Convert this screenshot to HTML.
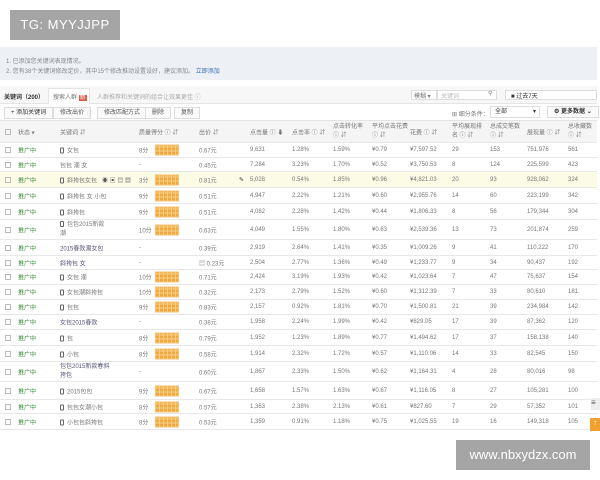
<!DOCTYPE html>
<html><head><meta charset="utf-8"><style>
*{margin:0;padding:0;box-sizing:border-box}
body{width:600px;height:480px;background:#fff;position:relative;overflow:hidden;font-family:"Liberation Sans","Noto Sans CJK SC",sans-serif;font-size:6px;color:#777}
.a{position:absolute;white-space:nowrap}
.tg{left:10px;top:10px;width:110px;height:30px;background:#a5a5a5;color:#fff;font-size:13px;line-height:30px;text-align:center;letter-spacing:.5px}
.wm{left:456px;top:440px;width:134px;height:30px;background:#a5a5a5;color:#fff;font-size:13px;line-height:30px;text-align:center}
.info{left:0;top:47px;width:597px;height:33px;background:#edf1f6}
.r{position:absolute;left:0;width:597px;border-bottom:1px solid #e8e8e8}
.r span{position:absolute;top:50%;transform:translateY(-50%);white-space:nowrap}
.g{color:#3a8a3a}
.q{width:24px;height:11px;background-color:#f2a93b;background-image:repeating-linear-gradient(90deg,transparent 0 3px,#f8cf8a 3px 4px),repeating-linear-gradient(0deg,transparent 0 3px,#f8cf8a 3px 4px);border:1px solid #f7c27a}
.ph{display:inline-block;width:4px;height:6px;border:1px solid #666;border-radius:1px;margin-right:3px;vertical-align:middle}
.cb{width:6px;height:6px;border:1px solid #bbb}
.btn{border:1px solid #ddd;background:#fafafa;height:12px;line-height:11px;padding:0 6px;color:#555}
</style></head><body>
<div class="a tg">TG: MYYJJPP</div>
<div class="a info"></div>
<div class="a" style="left:6px;top:56px;color:#888">1. 已添加您关键词表现情况。</div>
<div class="a" style="left:6px;top:66px;color:#888">2. 您有38个关键词修改定价，其中15个修改推动设置设好，建议添加。 <span style="color:#3a6fb0">立即添加</span></div>
<div class="a" style="left:0;top:86px;width:597px;height:18px;background:#f7f7f7;border-bottom:1px solid #e4e4e4"></div>
<div class="a" style="left:4px;top:92px;color:#333;font-weight:bold">关键词（200）</div>
<div class="a" style="left:48px;top:88px;width:42px;height:16px;background:#fff;border:1px solid #e4e4e4;border-bottom:none"></div>
<div class="a" style="left:53px;top:92px">搜索人群 <span style="background:#e05a4a;color:#fff;padding:0 1px">新</span></div>
<div class="a" style="left:97px;top:92px;color:#aaa">人群推荐和关键词的组合让效果更佳 ⓘ</div>
<div class="a" style="left:411px;top:90px;width:26px;height:10px;border:1px solid #ddd;background:#fff;padding-left:2px">模糊 ▾</div>
<div class="a" style="left:437px;top:90px;width:60px;height:10px;border:1px solid #ddd;background:#fff;padding-left:3px;color:#bbb">关键词</div>
<div class="a" style="left:488px;top:90px">⚲</div>
<div class="a" style="left:505px;top:90px;width:92px;height:10px;border:1px solid #ddd;background:#fff;padding-left:5px;color:#333">■ 过去7天</div>
<div class="a btn" style="left:4px;top:107px;color:#333">+ 添加关键词</div>
<div class="a btn" style="left:53px;top:107px">修改出价</div>
<div class="a" style="left:87px;top:109px;color:#bbb">ⓘ</div>
<div class="a btn" style="left:97px;top:107px">修改匹配方式</div>
<div class="a btn" style="left:145px;top:107px">删除</div>
<div class="a btn" style="left:174px;top:107px">复制</div>
<div class="a" style="left:452px;top:109px">⊞ 细分条件：</div>
<div class="a" style="left:490px;top:106px;width:50px;height:12px;border:1px solid #ddd;padding-left:4px;line-height:11px;color:#333">全部 <span style="float:right;margin-right:3px">▾</span></div>
<div class="a btn" style="left:547px;top:106px;color:#333;font-weight:bold">⚙ 更多数据 ⌄</div>
<div class="r" style="top:120px;height:23px;background:#f5f5f5;border-top:1px solid #e4e4e4">
<span class="cb" style="left:5px"></span><span style="left:18px">状态 ▾</span><span style="left:60px">关键词 ⇵</span><span style="left:139px">质量得分 ⓘ ⇵</span><span style="left:199px">出价 ⇵</span><span style="left:250px">点击量 ⓘ ⬇</span><span style="left:292px">点击率 ⓘ ⇵</span><span style="left:333px;line-height:9px">点击转化率<br>ⓘ ⇵</span><span style="left:372px;line-height:9px">平均点击花费<br>ⓘ ⇵</span><span style="left:410px">花费 ⓘ ⇵</span><span style="left:452px;line-height:9px">平均展现排<br>名 ⓘ ⇵</span><span style="left:490px;line-height:9px">总成交笔数<br>ⓘ ⇵</span><span style="left:527px">展现量 ⓘ ⇵</span><span style="left:568px;line-height:9px">总收藏数<br>ⓘ ⇵</span></div>

<div class="r" style="top:143px;height:15px"><span class="cb" style="left:5px"></span><span class="g" style="left:18px">推广中</span><span style="left:60px"><i class="ph"></i>女包</span><span style="left:139px">8分</span><span class="q" style="left:155px"></span><span style="left:199px">0.67元</span><span style="left:250px">9,631</span><span style="left:292px">1.28%</span><span style="left:333px">1.59%</span><span style="left:372px">¥0.79</span><span style="left:410px">¥7,597.52</span><span style="left:452px">29</span><span style="left:490px">153</span><span style="left:527px">751,976</span><span style="left:568px">561</span></div>
<div class="r" style="top:158px;height:14px"><span class="cb" style="left:5px"></span><span class="g" style="left:18px">推广中</span><span style="left:60px">包包 潮 女</span><span style="left:139px">-</span><span style="left:199px">0.45元</span><span style="left:250px">7,284</span><span style="left:292px">3.23%</span><span style="left:333px">1.70%</span><span style="left:372px">¥0.52</span><span style="left:410px">¥3,750.53</span><span style="left:452px">8</span><span style="left:490px">124</span><span style="left:527px">225,599</span><span style="left:568px">423</span></div>
<div class="r" style="top:172px;height:16px;background:#fbfbe6"><span class="cb" style="left:5px"></span><span class="g" style="left:18px">推广中</span><span style="left:60px"><i class="ph"></i>斜挎包女包</span><span style="left:102px;color:#555">◉ ▣ ▤ ▦</span><span style="left:139px">3分</span><span class="q" style="left:155px"></span><span style="left:199px">0.81元</span><span style="left:239px;color:#333">✎</span><span style="left:250px">5,028</span><span style="left:292px">0.54%</span><span style="left:333px">1.85%</span><span style="left:372px">¥0.96</span><span style="left:410px">¥4,821.03</span><span style="left:452px">20</span><span style="left:490px">93</span><span style="left:527px">928,062</span><span style="left:568px">324</span></div>
<div class="r" style="top:188px;height:16px"><span class="cb" style="left:5px"></span><span class="g" style="left:18px">推广中</span><span style="left:60px"><i class="ph"></i>斜挎包 女 小包</span><span style="left:139px">9分</span><span class="q" style="left:155px"></span><span style="left:199px">0.51元</span><span style="left:250px">4,947</span><span style="left:292px">2.22%</span><span style="left:333px">1.21%</span><span style="left:372px">¥0.60</span><span style="left:410px">¥2,955.76</span><span style="left:452px">14</span><span style="left:490px">60</span><span style="left:527px">223,199</span><span style="left:568px">342</span></div>
<div class="r" style="top:204px;height:16px"><span class="cb" style="left:5px"></span><span class="g" style="left:18px">推广中</span><span style="left:60px"><i class="ph"></i>斜挎包</span><span style="left:139px">9分</span><span class="q" style="left:155px"></span><span style="left:199px">0.51元</span><span style="left:250px">4,082</span><span style="left:292px">2.28%</span><span style="left:333px">1.42%</span><span style="left:372px">¥0.44</span><span style="left:410px">¥1,806.33</span><span style="left:452px">8</span><span style="left:490px">56</span><span style="left:527px">179,344</span><span style="left:568px">304</span></div>
<div class="r" style="top:220px;height:20px"><span class="cb" style="left:5px"></span><span class="g" style="left:18px">推广中</span><span style="left:60px;line-height:9px"><i class="ph"></i>包包2015新款<br>潮</span><span style="left:139px">10分</span><span class="q" style="left:155px"></span><span style="left:199px">0.63元</span><span style="left:250px">4,049</span><span style="left:292px">1.55%</span><span style="left:333px">1.80%</span><span style="left:372px">¥0.63</span><span style="left:410px">¥2,539.36</span><span style="left:452px">13</span><span style="left:490px">73</span><span style="left:527px">201,874</span><span style="left:568px">259</span></div>
<div class="r" style="top:240px;height:16px"><span class="cb" style="left:5px"></span><span class="g" style="left:18px">推广中</span><span style="left:60px;color:#557">2015春款潮女包</span><span style="left:139px">-</span><span style="left:199px">0.39元</span><span style="left:250px">2,919</span><span style="left:292px">2.64%</span><span style="left:333px">1.41%</span><span style="left:372px">¥0.35</span><span style="left:410px">¥1,009.26</span><span style="left:452px">9</span><span style="left:490px">41</span><span style="left:527px">110,222</span><span style="left:568px">170</span></div>
<div class="r" style="top:256px;height:14px"><span class="cb" style="left:5px"></span><span class="g" style="left:18px">推广中</span><span style="left:60px;color:#557">斜挎包 女</span><span style="left:139px">-</span><span style="left:199px">▤ 0.23元</span><span style="left:250px">2,504</span><span style="left:292px">2.77%</span><span style="left:333px">1.36%</span><span style="left:372px">¥0.49</span><span style="left:410px">¥1,233.77</span><span style="left:452px">9</span><span style="left:490px">34</span><span style="left:527px">90,437</span><span style="left:568px">192</span></div>
<div class="r" style="top:270px;height:15px"><span class="cb" style="left:5px"></span><span class="g" style="left:18px">推广中</span><span style="left:60px"><i class="ph"></i>女包 潮</span><span style="left:139px">10分</span><span class="q" style="left:155px"></span><span style="left:199px">0.71元</span><span style="left:250px">2,424</span><span style="left:292px">3.19%</span><span style="left:333px">1.93%</span><span style="left:372px">¥0.42</span><span style="left:410px">¥1,023.64</span><span style="left:452px">7</span><span style="left:490px">47</span><span style="left:527px">75,637</span><span style="left:568px">154</span></div>
<div class="r" style="top:285px;height:15px"><span class="cb" style="left:5px"></span><span class="g" style="left:18px">推广中</span><span style="left:60px"><i class="ph"></i>女包潮斜挎包</span><span style="left:139px">10分</span><span class="q" style="left:155px"></span><span style="left:199px">0.32元</span><span style="left:250px">2,173</span><span style="left:292px">2.79%</span><span style="left:333px">1.52%</span><span style="left:372px">¥0.60</span><span style="left:410px">¥1,312.39</span><span style="left:452px">7</span><span style="left:490px">33</span><span style="left:527px">80,610</span><span style="left:568px">181</span></div>
<div class="r" style="top:300px;height:15px"><span class="cb" style="left:5px"></span><span class="g" style="left:18px">推广中</span><span style="left:60px"><i class="ph"></i>包包</span><span style="left:139px">9分</span><span class="q" style="left:155px"></span><span style="left:199px">0.83元</span><span style="left:250px">2,157</span><span style="left:292px">0.92%</span><span style="left:333px">1.81%</span><span style="left:372px">¥0.70</span><span style="left:410px">¥1,500.81</span><span style="left:452px">21</span><span style="left:490px">39</span><span style="left:527px">234,984</span><span style="left:568px">142</span></div>
<div class="r" style="top:315px;height:15px"><span class="cb" style="left:5px"></span><span class="g" style="left:18px">推广中</span><span style="left:60px;color:#557">女包2015春款</span><span style="left:139px">-</span><span style="left:199px">0.38元</span><span style="left:250px">1,958</span><span style="left:292px">2.24%</span><span style="left:333px">1.99%</span><span style="left:372px">¥0.42</span><span style="left:410px">¥829.05</span><span style="left:452px">17</span><span style="left:490px">39</span><span style="left:527px">87,362</span><span style="left:568px">120</span></div>
<div class="r" style="top:330px;height:16px"><span class="cb" style="left:5px"></span><span class="g" style="left:18px">推广中</span><span style="left:60px"><i class="ph"></i>包</span><span style="left:139px">8分</span><span class="q" style="left:155px"></span><span style="left:199px">0.79元</span><span style="left:250px">1,952</span><span style="left:292px">1.23%</span><span style="left:333px">1.89%</span><span style="left:372px">¥0.77</span><span style="left:410px">¥1,494.62</span><span style="left:452px">17</span><span style="left:490px">37</span><span style="left:527px">158,138</span><span style="left:568px">140</span></div>
<div class="r" style="top:346px;height:16px"><span class="cb" style="left:5px"></span><span class="g" style="left:18px">推广中</span><span style="left:60px"><i class="ph"></i>小包</span><span style="left:139px">8分</span><span class="q" style="left:155px"></span><span style="left:199px">0.58元</span><span style="left:250px">1,914</span><span style="left:292px">2.32%</span><span style="left:333px">1.72%</span><span style="left:372px">¥0.57</span><span style="left:410px">¥1,110.06</span><span style="left:452px">14</span><span style="left:490px">33</span><span style="left:527px">82,545</span><span style="left:568px">150</span></div>
<div class="r" style="top:362px;height:20px"><span class="cb" style="left:5px"></span><span class="g" style="left:18px">推广中</span><span style="left:60px;line-height:9px;color:#557">包包2015新款春斜<br>挎包</span><span style="left:139px">-</span><span style="left:199px">0.60元</span><span style="left:250px">1,867</span><span style="left:292px">2.33%</span><span style="left:333px">1.50%</span><span style="left:372px">¥0.62</span><span style="left:410px">¥1,164.31</span><span style="left:452px">4</span><span style="left:490px">28</span><span style="left:527px">80,016</span><span style="left:568px">98</span></div>
<div class="r" style="top:382px;height:18px"><span class="cb" style="left:5px"></span><span class="g" style="left:18px">推广中</span><span style="left:60px"><i class="ph"></i>2015包包</span><span style="left:139px">9分</span><span class="q" style="left:155px"></span><span style="left:199px">0.67元</span><span style="left:250px">1,658</span><span style="left:292px">1.57%</span><span style="left:333px">1.63%</span><span style="left:372px">¥0.67</span><span style="left:410px">¥1,116.05</span><span style="left:452px">8</span><span style="left:490px">27</span><span style="left:527px">105,281</span><span style="left:568px">100</span></div>
<div class="r" style="top:400px;height:14px"><span class="cb" style="left:5px"></span><span class="g" style="left:18px">推广中</span><span style="left:60px"><i class="ph"></i>包包女潮小包</span><span style="left:139px">8分</span><span class="q" style="left:155px"></span><span style="left:199px">0.57元</span><span style="left:250px">1,363</span><span style="left:292px">2.38%</span><span style="left:333px">2.13%</span><span style="left:372px">¥0.61</span><span style="left:410px">¥827.60</span><span style="left:452px">7</span><span style="left:490px">29</span><span style="left:527px">57,352</span><span style="left:568px">101</span></div>
<div class="r" style="top:414px;height:16px"><span class="cb" style="left:5px"></span><span class="g" style="left:18px">推广中</span><span style="left:60px"><i class="ph"></i>小包包斜挎包</span><span style="left:139px">8分</span><span class="q" style="left:155px"></span><span style="left:199px">0.53元</span><span style="left:250px">1,359</span><span style="left:292px">0.91%</span><span style="left:333px">1.18%</span><span style="left:372px">¥0.75</span><span style="left:410px">¥1,025.55</span><span style="left:452px">19</span><span style="left:490px">16</span><span style="left:527px">149,318</span><span style="left:568px">105</span></div>
<div class="a" style="left:591px;top:398px;width:9px;height:12px;background:#eee;color:#555;font-size:8px">≡</div>
<div class="a" style="left:590px;top:418px;width:10px;height:13px;background:#f0a030;color:#fff;font-size:8px;text-align:center">↑</div>
<div class="a wm">www.nbxydzx.com</div>
</body></html>
